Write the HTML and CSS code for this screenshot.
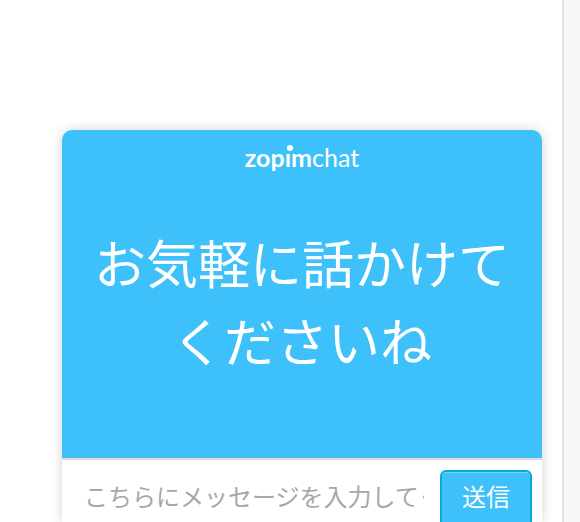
FILE: index.html
```html
<!DOCTYPE html>
<html lang="ja">
<head>
    <meta charset="UTF-8">
    <meta name="viewport" content="width=device-width, initial-scale=1.0">
    <title>zopim chat</title>
    <link rel="stylesheet" href="styles.css">
</head>
<body>
    <div class="page">
        <main class="content">
            <div class="chat-widget">
                <div class="chat-header">
                    <div class="logo"><span class="logo-bold">zop<span class="logo-i">ı</span>m</span><span class="logo-light">chat</span></div>
                    <h1 class="greeting">お気軽に話かけて<br>くださいね</h1>
                </div>
                <form class="chat-form">
                    <div class="chat-input">こちらにメッセージを入力してください</div>
                    <button class="send-btn" type="button">送信</button>
                </form>
            </div>
        </main>
        <div class="sidebar"></div>
    </div>
</body>
</html>
```

FILE: styles.css
```css
* {
    margin: 0;
    padding: 0;
    box-sizing: border-box;
}

html, body {
    height: 100%;
    overflow: hidden;
    background: #fff;
}

body {
    font-family: "Noto Sans CJK JP", "Noto Sans", sans-serif;
}

.page {
    display: flex;
    height: 522px;
    overflow: hidden;
}

.content {
    width: 562px;
    padding: 130px 20px 0 62px;
}

.sidebar {
    flex: 1;
    background: #f8f8f8;
    border-left: 2px solid #e2e2e2;
}

.chat-widget {
    width: 480px;
    height: 392px;
    border-radius: 10px 10px 0 0;
    box-shadow: 0 0 12px rgba(0, 0, 0, 0.18);
    background: #fff;
    overflow: hidden;
}

.chat-header {
    height: 330px;
    background: #3ec1fb;
    border-bottom: 2px solid #dddddd;
    color: #fff;
    text-align: center;
}

.logo {
    display: flex;
    justify-content: center;
    padding-top: 11px;
    height: 93px;
    font-family: Lato, sans-serif;
    font-size: 25px;
    line-height: 32px;
}

.logo-bold {
    font-weight: 700;
}

.logo-i {
    position: relative;
}

.logo-i::before {
    content: "";
    position: absolute;
    top: 3px;
    left: 2px;
    width: 6px;
    height: 6px;
    border-radius: 50%;
    background: #fff;
}

.logo-light {
    font-weight: 400;
}

.greeting {
    font-size: 52px;
    font-weight: 400;
    line-height: 78px;
}

.chat-form {
    display: flex;
    align-items: flex-start;
    padding: 10px 10px 0 22px;
}

.chat-input {
    width: 340px;
    margin-right: 16px;
    overflow: hidden;
    white-space: nowrap;
    font-size: 24px;
    line-height: 52px;
    color: #aaa6a6;
}

.send-btn {
    width: 92px;
    height: 60px;
    padding-bottom: 10px;
    background: #3ec1fb;
    border: 2px solid #0aa9da;
    border-radius: 6px;
    box-shadow: inset 0 1px 0 rgba(255, 255, 255, 0.3);
    color: #fff;
    font-family: inherit;
    font-size: 24px;
}
```
